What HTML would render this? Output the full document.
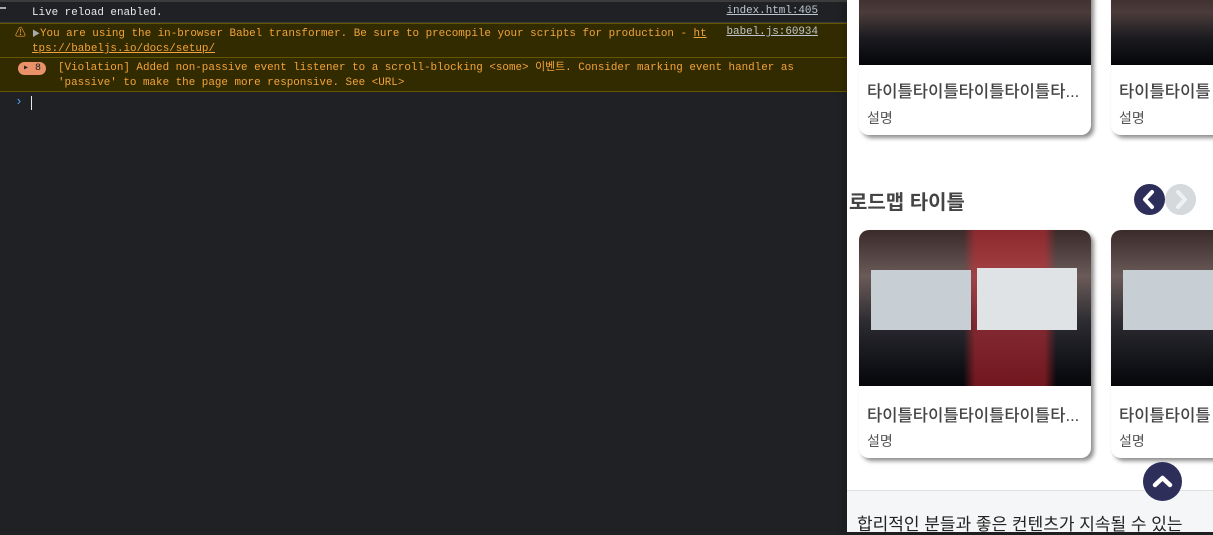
<!DOCTYPE html>
<html><head><meta charset="utf-8"><style>
*{margin:0;padding:0;box-sizing:border-box}
body{width:1213px;height:535px;overflow:hidden;background:#202124;position:relative;font-family:"Liberation Mono","Noto Sans CJK KR",monospace;}
.con{position:absolute;left:0;top:0;width:847px;height:535px;background:#202124;font-size:10.9px;}
.row{position:absolute;left:0;width:847px}
.r1{top:3px;height:20px;color:#e8eaed;border-bottom:1px solid #3c3c3c}
.warn{top:23px;height:35px;background:#332b00;border-top:1px solid #665500;border-bottom:1px solid #665500;color:#f2a33a}
.viol{top:58px;height:34px;background:#332b00;border-bottom:1px solid #665500;color:#f2a33a}
.t{position:absolute;white-space:pre;line-height:16px}
.src{position:absolute;right:29px;color:#bdc6cf;text-decoration:underline}
.page{position:absolute;left:847px;top:0;width:366px;height:532px;background:#fff;box-shadow:-4px 0 6px rgba(0,0,0,.15);overflow:hidden;font-family:"Liberation Sans","Noto Sans CJK KR",sans-serif}
.card{position:absolute;width:232px;background:#fff;border-radius:0 0 10px 10px;box-shadow:3px 3px 4px rgba(0,0,0,.45);overflow:hidden}
.img{position:absolute;left:0;top:0;width:100%;background:linear-gradient(#3a2a2a 0%,#4b3c3a 30%,#1a1a1f 65%,#05060a 100%)}
.ct{position:absolute;left:8px;font-size:16.6px;color:#444;font-weight:500;white-space:nowrap}
.cd{position:absolute;left:8px;font-size:14px;color:#555}
</style></head><body>
<div class="con">
<div style="position:absolute;left:0;top:0;width:847px;height:2px;background:#3c3c3c"></div>
<div style="position:absolute;left:0;top:7px;width:6px;height:2px;background:#aaa"></div>
<div class="row r1"><span class="t" style="left:32px;top:2px">Live reload enabled.</span><span class="src" style="top:2px">index.html:405</span></div>
<div class="row warn"><span class="t" style="left:15px;top:2px">⚠</span><span class="t" style="left:32px;top:2px"><span style="color:#aaa;font-size:8px">▶</span>You are using the in-browser Babel transformer. Be sure to precompile your scripts for production - <u>ht</u></span><span class="t" style="left:32px;top:17px;text-decoration:underline">tps://babeljs.io/docs/setup/</span><span class="src" style="top:2px">babel.js:60934</span></div>
<div class="row viol"><span style="position:absolute;left:18px;top:4px;width:28px;height:13px;border-radius:7px;background:#e9926a;color:#202124;font-size:10px;line-height:13px;text-align:center">▸ 8</span><span class="t" style="left:58px;top:2px">[Violation] Added non-passive event listener to a scroll-blocking &lt;some&gt; 이벤트. Consider marking event handler as</span><span class="t" style="left:58px;top:17px">'passive' to make the page more responsive. See &lt;URL&gt;</span></div>
<span class="t" style="left:15px;top:94px;color:#4aa3f0;font-size:13px">›</span>
<div style="position:absolute;left:31px;top:96px;width:1px;height:14px;background:#e8eaed"></div>
</div>
<div class="page">
<div class="card" style="left:12px;top:-10px;height:145px"><div class="img" style="height:75px"></div><div class="ct" style="top:88px">타이틀타이틀타이틀타이틀타...</div><div class="cd" style="top:118px">설명</div></div>
<div class="card" style="left:264px;top:-10px;height:145px"><div class="img" style="height:75px"></div><div class="ct" style="top:88px">타이틀타이틀</div><div class="cd" style="top:118px">설명</div></div>
<div style="position:absolute;left:2px;top:186px;font-size:20px;font-weight:bold;color:#444">로드맵 타이틀</div>
<div style="position:absolute;left:287px;top:184px;width:31px;height:31px;border-radius:50%;background:#2d2f5a"></div>
<svg style="position:absolute;left:287px;top:184px" width="31" height="31"><path d="M18 8 L11 15.5 L18 23" stroke="#fff" stroke-width="4" fill="none" stroke-linecap="round" stroke-linejoin="round"/></svg>
<div style="position:absolute;left:318px;top:184px;width:31px;height:31px;border-radius:50%;background:#d5d9dc"></div>
<svg style="position:absolute;left:318px;top:184px" width="31" height="31"><path d="M13 8 L20 15.5 L13 23" stroke="#eef0f2" stroke-width="4" fill="none" stroke-linecap="round" stroke-linejoin="round"/></svg>
<div class="card" style="left:12px;top:230px;height:228px;border-radius:10px"><div class="img" style="height:156px;background:linear-gradient(90deg,rgba(0,0,0,0) 0%,rgba(0,0,0,0) 45%,rgba(220,40,50,.5) 50%,rgba(220,40,50,.5) 80%,rgba(0,0,0,0) 85%),linear-gradient(#3a2a2a 0%,#6a5a58 30%,#2a2a30 60%,#05060a 100%)"></div><div style="position:absolute;left:12px;top:40px;width:100px;height:60px;background:#c8cfd4"></div><div style="position:absolute;left:118px;top:38px;width:100px;height:62px;background:#dfe3e6"></div><div class="ct" style="top:172px">타이틀타이틀타이틀타이틀타...</div><div class="cd" style="top:201px">설명</div></div>
<div class="card" style="left:264px;top:230px;height:228px;border-radius:10px"><div class="img" style="height:156px;background:linear-gradient(#3a2a2a 0%,#6a5a58 30%,#2a2a30 60%,#05060a 100%)"></div><div style="position:absolute;left:12px;top:40px;width:100px;height:60px;background:#c8cfd4"></div><div class="ct" style="top:172px">타이틀타이틀</div><div class="cd" style="top:201px">설명</div></div>
<div style="position:absolute;left:0;top:490px;width:366px;height:42px;background:#f5f6f7;border-top:1px solid #e2e2e2"></div>
<div style="position:absolute;left:10px;top:510px;font-size:17px;color:#222">합리적인 분들과 좋은 컨텐츠가 지속될 수 있는</div>
<div style="position:absolute;left:296px;top:462px;width:39px;height:39px;border-radius:50%;background:#2d2f5a"></div>
<svg style="position:absolute;left:296px;top:462px" width="39" height="39"><path d="M12 23 L19.5 16 L27 23" stroke="#fff" stroke-width="4.5" fill="none" stroke-linecap="round" stroke-linejoin="round"/></svg>
</div>
</body></html>
